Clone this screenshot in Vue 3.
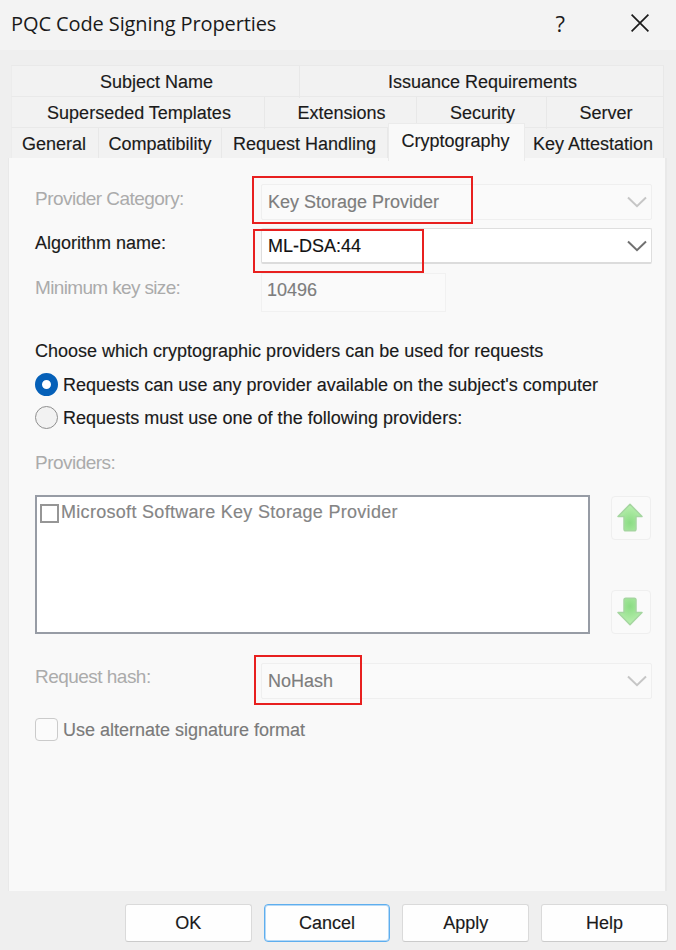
<template>
  <div class="dialog">
    <header class="titlebar">
      <span class="title">PQC Code Signing Properties</span>
      <span class="help">?</span>
      <svg class="close" viewBox="0 0 18 18" fill="none" stroke="#1b1b1b" stroke-width="1.7">
        <path d="M0.6 0.6L17.4 17.4M17.4 0.6L0.6 17.4"/>
      </svg>
    </header>

    <nav class="tabs">
      <div v-for="(row, i) in tabRows" :key="i" class="tab-row">
        <div
          v-for="tab in row"
          :key="tab.label"
          class="tab"
          :class="{ active: tab.label === activeTab }"
          :style="{ width: tab.width + 'px' }"
          @click="activeTab = tab.label"
        >
          <span>{{ tab.label }}</span>
        </div>
      </div>
    </nav>

    <main class="panel">
      <div class="field category">
        <label class="disabled">Provider Category:</label>
        <div class="combo combo-disabled">
          <span>Key Storage Provider</span>
          <svg class="chevron" viewBox="0 0 20 12" fill="none"><path d="M1 1.5L10 10.2L19 1.5"/></svg>
          <i class="mark mark-category"></i>
        </div>
      </div>

      <div class="field algorithm">
        <label>Algorithm name:</label>
        <div class="combo">
          <span>ML-DSA:44</span>
          <svg class="chevron" viewBox="0 0 20 12" fill="none"><path d="M1 1.5L10 10.2L19 1.5"/></svg>
          <i class="mark mark-algorithm"></i>
        </div>
      </div>

      <div class="field keysize">
        <label class="disabled">Minimum key size:</label>
        <div class="edit">10496</div>
      </div>

      <p class="choose">Choose which cryptographic providers can be used for requests</p>

      <div
        v-for="option in options"
        :key="option.id"
        class="radio-row"
        @click="selected = option.id"
      >
        <span class="radio" :class="{ checked: selected === option.id }"></span>
        <span>{{ option.label }}</span>
      </div>

      <label class="disabled providers-label">Providers:</label>
      <div class="providers">
        <div class="listbox">
          <div class="list-item">
            <span class="list-check"></span>
            <span>Microsoft Software Key Storage Provider</span>
          </div>
        </div>
        <div class="arrows">
          <div v-for="dir in ['up', 'down']" :key="dir" class="arrow-btn">
            <svg :class="dir" viewBox="0 0 26 29">
              <defs>
                <radialGradient :id="'arrow-' + dir" cx="0.5" cy="0.7" r="0.6">
                  <stop offset="0" stop-color="#8bdc84"/>
                  <stop offset="1" stop-color="#b4edaa"/>
                </radialGradient>
              </defs>
              <path
                d="M13 1.2L25 13.5H19V26Q19 27.8 17.2 27.8H8.8Q7 27.8 7 26V13.5H1Z"
                :fill="`url(#arrow-${dir})`"
                stroke="#a5d6a0"
                stroke-width="1.5"
                stroke-linejoin="round"
              />
            </svg>
          </div>
        </div>
      </div>

      <div class="field hash">
        <label class="disabled">Request hash:</label>
        <div class="combo combo-disabled">
          <span>NoHash</span>
          <svg class="chevron" viewBox="0 0 20 12" fill="none"><path d="M1 1.5L10 10.2L19 1.5"/></svg>
          <i class="mark mark-hash"></i>
        </div>
      </div>

      <div class="alternate">
        <span class="checkbox"></span>
        <span>Use alternate signature format</span>
      </div>
    </main>

    <footer class="buttons">
      <button
        v-for="name in ['OK', 'Cancel', 'Apply', 'Help']"
        :key="name"
        :class="{ focused: name === 'Cancel' }"
      >{{ name }}</button>
    </footer>
  </div>
</template>

<script setup>
import { ref } from 'vue'

const activeTab = ref('Cryptography')
const selected = ref('any')

const tabRows = [
  [
    { label: 'Subject Name', width: 288 },
    { label: 'Issuance Requirements', width: 364 }
  ],
  [
    { label: 'Superseded Templates', width: 253 },
    { label: 'Extensions', width: 152 },
    { label: 'Security', width: 130 },
    { label: 'Server', width: 117 }
  ],
  [
    { label: 'General', width: 87 },
    { label: 'Compatibility', width: 123 },
    { label: 'Request Handling', width: 166 },
    { label: 'Cryptography', width: 137 },
    { label: 'Key Attestation', width: 139 }
  ]
]

const options = [
  { id: 'any', label: "Requests can use any provider available on the subject's computer" },
  { id: 'listed', label: 'Requests must use one of the following providers:' }
]
</script>

<style>
body {
  margin: 0;
  background: #efefef;
}
</style>

<style scoped>
.dialog {
  width: 676px;
  height: 950px;
  overflow: hidden;
  background: #efefef;
  color: #1a1a1a;
  font: 18px/20px "Liberation Sans", Arial, sans-serif;
  white-space: nowrap;
  -webkit-text-stroke: 0.15px;
}

.dialog * {
  box-sizing: border-box;
}

.titlebar {
  display: flex;
  align-items: center;
  height: 50px;
  padding: 0 27px 4px 11px;
  background: #f3f3f3;
  font-family: "Open Sans", "Noto Sans", sans-serif;
  font-size: 20px;
  -webkit-text-stroke: 0;
}

.title {
  flex: 1;
  padding-top: 1px;
  letter-spacing: -0.1px;
}

.help {
  margin-right: 66px;
  font-size: 22px;
}

.close {
  width: 18px;
  height: 18px;
}

.tabs {
  padding: 15px 0 0 11px;
}

.tab-row {
  display: flex;
  width: 653px;
  height: 31px;
  border-top: 1px solid #e9e9e9;
  border-left: 1px solid #ececec;
  background: #f2f2f2;
}

.tab {
  display: flex;
  flex-shrink: 0;
  align-items: center;
  justify-content: center;
  height: 32px;
  padding-left: 2px;
  border-right: 1px solid #e8e8e8;
}

.tab-row:last-child .tab {
  height: 30px;
  padding: 2px 0 0;
}

.tab-row:last-child .tab:first-child,
.tab-row:last-child .tab:last-child {
  padding-right: 2px;
}

.tab-row .tab.active {
  position: relative;
  height: 38px;
  margin-top: -5px;
  padding: 0 2px 3px 0;
  border: 1px solid #ebebeb;
  border-bottom: 0;
  background: #f9f9f9;
}

.panel {
  width: 659px;
  height: 733px;
  margin-left: 8px;
  padding: 26px 13px 0 26px;
  border: 0 solid #e9e9e9;
  border-width: 0 2px 0 1px;
  background: #f9f9f9;
}

.field {
  display: flex;
  align-items: flex-start;
  height: 36px;
}

.field label {
  width: 226px;
  flex-shrink: 0;
  padding-top: 5px;
}

.disabled {
  color: #ababab;
  font-size: 19px;
  letter-spacing: -0.53px;
  -webkit-text-stroke: 0;
}

.keysize .disabled {
  letter-spacing: -0.65px;
}

.combo {
  position: relative;
  display: flex;
  align-items: center;
  justify-content: space-between;
  width: 391px;
  height: 36px;
  padding: 0 4px 0 6px;
  border: 1px solid #dedede;
  border-bottom: 2px solid #dcdcdc;
  border-radius: 2px;
  background: #fff;
  color: #111;
}

.combo-disabled {
  border: 1px solid #efefef;
  background: #fafafa;
  color: #7d7d7d;
}

.chevron {
  width: 20px;
  height: 12px;
  stroke: #707070;
  stroke-width: 2;
}

.combo-disabled .chevron {
  stroke: #c6c6c6;
}

.mark {
  position: absolute;
  border: 2px solid #e8201f;
}

.mark-category {
  top: -9px;
  left: -10px;
  width: 221px;
  height: 48px;
}

.mark-algorithm {
  top: 0;
  left: -9px;
  width: 171px;
  height: 44px;
}

.mark-hash {
  top: -9px;
  left: -8px;
  width: 108px;
  height: 50px;
}

.algorithm {
  margin-top: 8px;
}

.keysize {
  height: 40px;
  margin-top: 9px;
}

.edit {
  width: 185px;
  height: 39px;
  padding: 6px 5px;
  border: 1px solid #f1f1f1;
  background: #fafafa;
  color: #7d7d7d;
}

.choose {
  margin: 28px 0 7px;
}

.radio-row {
  display: flex;
  align-items: center;
  height: 33px;
  gap: 5px;
  letter-spacing: 0.02px;
}

.radio {
  width: 23px;
  height: 23px;
  border: 1px solid #8f8f8f;
  border-radius: 50%;
  background: #f2f2f2;
}

.radio.checked {
  border: 7px solid #0560b8;
  background: #fff;
}

.providers-label {
  display: block;
  margin: 19px 0 22px;
}

.providers {
  display: flex;
  justify-content: space-between;
  height: 139px;
}

.listbox {
  width: 555px;
  padding: 5px 3px;
  border: 2px solid #979ca5;
  background: #fff;
}

.list-item {
  display: flex;
  align-items: flex-start;
  gap: 2px;
  color: #858585;
  letter-spacing: 0.3px;
}

.list-check {
  width: 19px;
  height: 19px;
  margin-top: 2px;
  border: 2px solid #969696;
}

.arrows {
  display: flex;
  flex-direction: column;
  justify-content: space-between;
  padding: 1px 1px 0 0;
}

.arrow-btn {
  display: flex;
  align-items: center;
  justify-content: center;
  width: 40px;
  height: 44px;
  padding: 0 2px 2px 0;
  border: 1px solid #efefef;
  border-radius: 4px;
  background: #fafafa;
}

.arrow-btn svg {
  width: 26px;
  height: 29px;
}

.arrow-btn .down {
  transform: scaleY(-1);
}

.hash {
  margin-top: 29px;
}

.hash label {
  padding-top: 4px;
}

.alternate {
  display: flex;
  align-items: center;
  gap: 5px;
  margin-top: 19px;
  color: #7a7a7a;
}

.checkbox {
  width: 23px;
  height: 23px;
  border: 1px solid #cbcbcb;
  border-radius: 4px;
  background: #fbfbfb;
}

.buttons {
  display: flex;
  gap: 12px;
  padding: 13px 0 0 125px;
}

.buttons button {
  width: 126.7px;
  height: 38px;
  padding: 0;
  border: 1px solid #dadada;
  border-bottom-color: #cbcbcb;
  border-radius: 3px;
  background: #fefefe;
  color: #1a1a1a;
  font: inherit;
}

.buttons .focused {
  border: 1px solid #5eaeee;
  border-radius: 4px;
  box-shadow: inset 0 0 0 1px #b5d9f7;
}
</style>
